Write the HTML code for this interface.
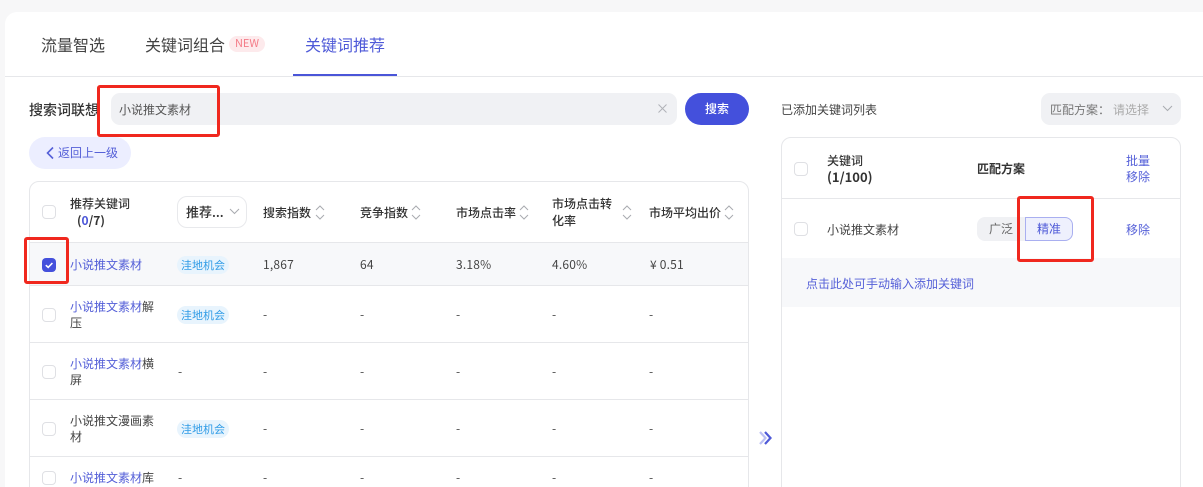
<!DOCTYPE html>
<html lang="zh">
<head>
<meta charset="utf-8">
<style>
html{margin:0;padding:0;width:1203px;height:487px;overflow:hidden}
body{margin:0;padding:0;width:1203px;height:487px;overflow:hidden;background:#f7f7f8;position:relative;font-family:"Noto Sans CJK SC","Liberation Sans",sans-serif;font-size:12px;color:#444}
div,span.a,svg{position:absolute;box-sizing:border-box}
.t{white-space:nowrap;line-height:16px}
.h{font-weight:500;color:#333}
.l{color:#5560d8}
.hl{position:absolute;height:1px;background:#e6e7ea}
.cb{width:14px;height:14px;border:1px solid #dfe0e4;border-radius:4px;background:#fff}
.tag{width:52px;height:18px;border-radius:9px;background:#e8f4fd;color:#2e9be6;font-size:11px;line-height:18px;text-align:center}
.red{border:3px solid #f0281e;border-radius:3px;z-index:5}
.s{width:10px;height:15px}
</style>
</head>
<body>
<div style="left:5px;top:12px;width:1198px;height:475px;background:#fff;border-radius:12px 0 0 0"></div>

<!-- tabs -->
<div class="t" style="left:41px;top:33px;font-size:16px;line-height:23px;color:#444">流量智选</div>
<div class="t" style="left:145px;top:33px;font-size:16px;line-height:23px;color:#444">关键词组合</div>
<div style="left:229px;top:36px;width:36px;height:16px;border-radius:8px;background:#fdeaec;color:#f47c88;font-size:11px;line-height:15px;text-align:center">NEW</div>
<div class="t" style="left:305px;top:33px;font-size:16px;line-height:23px;color:#4f5ad8">关键词推荐</div>
<div class="hl" style="left:5px;top:76px;width:1198px"></div>
<div style="left:293px;top:74px;width:104px;height:2px;background:#4a55d8"></div>

<!-- search row -->
<div class="t h" style="left:29px;top:101px;font-size:14px;line-height:18px">搜索词联想</div>
<div style="left:111px;top:93px;width:566px;height:32px;background:#f0f1f4;border-radius:9px"></div>
<div class="t" style="left:119px;top:102px;color:#555">小说推文素材</div>
<svg style="left:658px;top:104px" width="9" height="9" viewBox="0 0 9 9"><path d="M.5 .5L8.5 8.5M8.5 .5L.5 8.5" stroke="#b0b2b7" stroke-width="1" fill="none"/></svg>
<div style="left:685px;top:93px;width:64px;height:32px;background:#4450dc;border-radius:16px;color:#fff;text-align:center;line-height:32px;font-weight:500">搜索</div>
<div class="red" style="left:97px;top:85px;width:123px;height:52px"></div>

<!-- back -->
<div style="left:29px;top:137px;width:102px;height:32px;background:#eceeff;border-radius:16px"></div>
<svg style="left:45px;top:146px" width="10" height="14" viewBox="0 0 10 14"><path d="M8 1.5L2.5 7L8 12.5" stroke="#5560d8" stroke-width="1.6" fill="none"/></svg>
<div class="t l" style="left:58px;top:145px">返回上一级</div>

<!-- left table -->
<div style="left:29px;top:181px;width:720px;height:320px;border:1px solid #e6e7ea;border-radius:10px"></div>
<div style="left:30px;top:243px;width:718px;height:42px;background:#f7f8fa"></div>
<div class="hl" style="left:30px;top:242px;width:718px"></div>
<div class="hl" style="left:30px;top:285px;width:718px"></div>
<div class="hl" style="left:30px;top:342px;width:718px"></div>
<div class="hl" style="left:30px;top:399px;width:718px"></div>
<div class="hl" style="left:30px;top:456px;width:718px"></div>

<div class="cb" style="left:42px;top:205px"></div>
<div class="t h" style="left:70px;top:196px">推荐关键词</div>
<div class="t h" style="left:77px;top:213px;font-weight:700">(<span style="color:#4a55d8">0</span>/7)</div>
<div style="left:177px;top:196px;width:70px;height:32px;border:1px solid #e8e9ec;border-radius:10px"></div>
<div class="t h" style="left:186px;top:204px;font-size:13px">推荐...</div>
<svg style="left:229px;top:208px" width="11" height="7" viewBox="0 0 11 7"><path d="M1 1L5.5 5.5L10 1" stroke="#a9abb0" stroke-width="1" fill="none"/></svg>

<div class="t h" style="left:263px;top:205px">搜索指数</div>
<svg class="s" style="left:315px;top:205px" viewBox="0 0 10 15"><path d="M1 5L5 1L9 5M1 10L5 14L9 10" stroke="#a9abb0" stroke-width="1" fill="none"/></svg>
<div class="t h" style="left:360px;top:205px">竞争指数</div>
<svg class="s" style="left:411px;top:205px" viewBox="0 0 10 15"><path d="M1 5L5 1L9 5M1 10L5 14L9 10" stroke="#a9abb0" stroke-width="1" fill="none"/></svg>
<div class="t h" style="left:456px;top:205px">市场点击率</div>
<svg class="s" style="left:519px;top:205px" viewBox="0 0 10 15"><path d="M1 5L5 1L9 5M1 10L5 14L9 10" stroke="#a9abb0" stroke-width="1" fill="none"/></svg>
<div class="t h" style="left:552px;top:196px">市场点击转</div>
<div class="t h" style="left:552px;top:213px">化率</div>
<svg class="s" style="left:622px;top:205px" viewBox="0 0 10 15"><path d="M1 5L5 1L9 5M1 10L5 14L9 10" stroke="#a9abb0" stroke-width="1" fill="none"/></svg>
<div class="t h" style="left:649px;top:205px">市场平均出价</div>
<svg class="s" style="left:724px;top:205px" viewBox="0 0 10 15"><path d="M1 5L5 1L9 5M1 10L5 14L9 10" stroke="#a9abb0" stroke-width="1" fill="none"/></svg>

<!-- row 1 -->
<div style="left:42px;top:258px;width:14px;height:14px;background:#4450dc;border-radius:4px"></div>
<svg style="left:42px;top:258px" width="14" height="14" viewBox="0 0 14 14"><path d="M3.8 7.2L6.2 9.4L10.4 5" stroke="#fff" stroke-width="1.6" fill="none"/></svg>
<div class="red" style="left:24px;top:237px;width:45px;height:47px"></div>
<div class="t l" style="left:70px;top:257px">小说推文素材</div>
<div class="tag" style="left:177px;top:256px">洼地机会</div>
<div class="t" style="left:263px;top:257px;letter-spacing:.2px">1,867</div>
<div class="t" style="left:360px;top:257px;letter-spacing:.2px">64</div>
<div class="t" style="left:456px;top:257px;letter-spacing:.2px">3.18%</div>
<div class="t" style="left:552px;top:257px;letter-spacing:.2px">4.60%</div>
<div class="t" style="left:650px;top:257px;letter-spacing:.2px">¥ 0.51</div>

<!-- row 2 -->
<div class="cb" style="left:42px;top:308px"></div>
<div class="t" style="left:70px;top:299px"><span class="l">小说推文素材</span>解</div>
<div class="t" style="left:70px;top:315px">压</div>
<div class="tag" style="left:177px;top:306px">洼地机会</div>
<div class="t" style="left:263px;top:307px">-</div>
<div class="t" style="left:360px;top:307px">-</div>
<div class="t" style="left:456px;top:307px">-</div>
<div class="t" style="left:552px;top:307px">-</div>
<div class="t" style="left:649px;top:307px">-</div>

<!-- row 3 -->
<div class="cb" style="left:42px;top:365px"></div>
<div class="t" style="left:70px;top:356px"><span class="l">小说推文素材</span>横</div>
<div class="t" style="left:70px;top:372px">屏</div>
<div class="t" style="left:178px;top:364px">-</div>
<div class="t" style="left:263px;top:364px">-</div>
<div class="t" style="left:360px;top:364px">-</div>
<div class="t" style="left:456px;top:364px">-</div>
<div class="t" style="left:552px;top:364px">-</div>
<div class="t" style="left:649px;top:364px">-</div>

<!-- row 4 -->
<div class="cb" style="left:42px;top:422px"></div>
<div class="t" style="left:70px;top:413px">小说推文漫画素</div>
<div class="t" style="left:70px;top:429px">材</div>
<div class="tag" style="left:177px;top:420px">洼地机会</div>
<div class="t" style="left:263px;top:421px">-</div>
<div class="t" style="left:360px;top:421px">-</div>
<div class="t" style="left:456px;top:421px">-</div>
<div class="t" style="left:552px;top:421px">-</div>
<div class="t" style="left:649px;top:421px">-</div>

<!-- row 5 -->
<div class="cb" style="left:42px;top:471px"></div>
<div class="t" style="left:70px;top:470px"><span class="l">小说推文素材</span>库</div>
<div class="t" style="left:178px;top:470px">-</div>
<div class="t" style="left:263px;top:470px">-</div>
<div class="t" style="left:360px;top:470px">-</div>
<div class="t" style="left:456px;top:470px">-</div>
<div class="t" style="left:552px;top:470px">-</div>
<div class="t" style="left:649px;top:470px">-</div>

<!-- arrow -->
<svg style="left:758px;top:430px" width="15" height="16" viewBox="0 0 15 16"><path d="M2 2L7.5 8L2 14" stroke="#bcc0f4" stroke-width="2.2" fill="none"/><path d="M7 2L12.5 8L7 14" stroke="#4f5ad8" stroke-width="2.2" fill="none"/></svg>

<!-- right -->
<div class="t" style="left:781px;top:102px">已添加关键词列表</div>
<div style="left:1041px;top:93px;width:140px;height:32px;background:#f0f1f4;border-radius:9px"></div>
<div class="t" style="left:1050px;top:102px;color:#777">匹配方案：</div>
<div class="t" style="left:1113px;top:102px;color:#aaa">请选择</div>
<svg style="left:1162px;top:105px" width="11" height="7" viewBox="0 0 11 7"><path d="M1 1L5.5 5.5L10 1" stroke="#a9abb0" stroke-width="1" fill="none"/></svg>

<div style="left:781px;top:137px;width:400px;height:370px;border:1px solid #e6e7ea;border-radius:10px"></div>
<div class="hl" style="left:782px;top:198px;width:398px"></div>
<div style="left:782px;top:258px;width:398px;height:49px;background:#f7f8fa"></div>
<div class="cb" style="left:794px;top:162px"></div>
<div class="t h" style="left:827px;top:153px">关键词</div>
<div class="t h" style="left:827px;top:169px;font-size:13px;font-weight:700">(1/100)</div>
<div class="t h" style="left:977px;top:161px;font-weight:700">匹配方案</div>
<div class="t l" style="left:1126px;top:153px">批量</div>
<div class="t l" style="left:1126px;top:169px">移除</div>

<div class="cb" style="left:794px;top:222px"></div>
<div class="t" style="left:827px;top:222px">小说推文素材</div>
<div style="left:977px;top:217px;width:50px;height:24px;background:#f0f1f4;border-radius:8px 0 0 8px"></div>
<div class="t" style="left:989px;top:221px;color:#666">广泛</div>
<div style="left:1025px;top:217px;width:48px;height:24px;background:#eef0fd;border:1px solid #a9aff0;border-radius:0 8px 8px 0;color:#4f5ad8;text-align:center;line-height:22px">精准</div>
<div class="red" style="left:1017px;top:196px;width:77px;height:66px"></div>
<div class="t l" style="left:1126px;top:222px">移除</div>
<div class="t l" style="left:806px;top:276px">点击此处可手动输入添加关键词</div>
</body>
</html>
